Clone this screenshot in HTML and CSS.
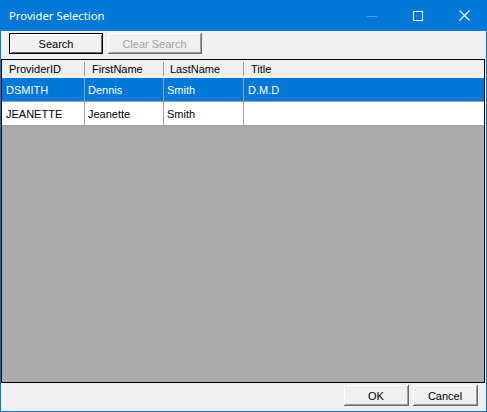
FILE: index.html
```html
<!DOCTYPE html>
<html lang="en">
<head>
  <meta charset="UTF-8" />
  <title>Provider Selection</title>
  <link rel="stylesheet" href="styles.css">
</head>
<body>
  <div class="window">
    <div class="titlebar">
      <span class="title">Provider Selection</span>
      <div class="caption-btn">
        <svg width="10" height="10" viewBox="0 0 10 10"><line x1="0" y1="5.5" x2="10" y2="5.5" stroke="#4a9fe6" stroke-width="1"/></svg>
      </div>
      <div class="caption-btn">
        <svg width="10" height="10" viewBox="0 0 10 10"><rect x="0.5" y="0.5" width="9" height="9" fill="none" stroke="#fff" stroke-width="1"/></svg>
      </div>
      <div class="caption-btn">
        <svg width="11" height="11" viewBox="0 0 11 11"><path d="M0.5 0.5 L10.5 10.5 M10.5 0.5 L0.5 10.5" stroke="#fff" stroke-width="1.1"/></svg>
      </div>
    </div>

    <div class="toolbar">
      <button class="btn btn-default">Search</button>
      <button class="btn" disabled>Clear Search</button>
    </div>

    <div class="grid">
      <div class="row header">
        <div class="cell c1">ProviderID</div>
        <div class="cell c2">FirstName</div>
        <div class="cell c3">LastName</div>
        <div class="cell c4">Title</div>
      </div>
      <div class="row selected">
        <div class="cell c1">DSMITH</div>
        <div class="cell c2">Dennis</div>
        <div class="cell c3">Smith</div>
        <div class="cell c4">D.M.D</div>
      </div>
      <div class="row">
        <div class="cell c1">JEANETTE</div>
        <div class="cell c2">Jeanette</div>
        <div class="cell c3">Smith</div>
        <div class="cell c4"></div>
      </div>
    </div>

    <div class="footer">
      <button class="btn btn-small">OK</button>
      <button class="btn btn-small">Cancel</button>
    </div>
  </div>
</body>
</html>
```

FILE: styles.css
```css
* {
  margin: 0;
  padding: 0;
  box-sizing: border-box;
}

html, body {
  background: #f0f0f0;
  font-family: 'Liberation Sans', Arial, sans-serif;
  font-size: 11px;
  color: #000;
}

.window {
  width: 487px;
  height: 412px;
  border: 1px solid #0078d7;
  border-top: none;
  display: flex;
  flex-direction: column;
  background: #f0f0f0;
}

.titlebar {
  height: 31px;
  background: #0078d7;
  display: flex;
  align-items: center;
  margin: 0 -1px;
  padding-left: 9px;
}

.title {
  flex: 1;
  color: #fff;
  font-family: 'Noto Sans', 'Open Sans', sans-serif;
  font-size: 11.3px;
  padding-bottom: 1px;
}

.caption-btn {
  width: 46px;
  height: 31px;
  display: flex;
  align-items: center;
  justify-content: center;
}

.toolbar {
  height: 28px;
  display: flex;
  gap: 5px;
  padding: 2px 0 0 8px;
}

.btn {
  width: 94px;
  height: 21px;
  font-family: 'Liberation Sans', Arial, sans-serif;
  font-size: 11px;
  color: #000;
  background: #f0f0f0;
  border: none;
  border-right: 1px solid #696969;
  border-bottom: 1px solid #696969;
  box-shadow: inset 1px 1px 0 #fff, inset -1px -1px 0 #a0a0a0;
  padding-top: 1px;
}

.btn-default {
  border: 1px solid #000;
  box-shadow: inset 1px 1px 0 #fff, inset -1px -1px 0 #696969;
}

.btn:disabled {
  color: #a0a0a0;
}

.grid {
  flex: 1;
  margin-right: 1px;
  border: 1px solid #000;
  background: #ababab;
}

.row {
  display: flex;
  height: 24px;
  background: #fff;
  border-bottom: 1px solid #a0a0a0;
}

.cell {
  display: flex;
  align-items: center;
  padding-left: 4px;
  border-right: 1px solid #a0a0a0;
  white-space: nowrap;
}

.c1 { width: 83px; }
.c2 { width: 79px; padding-left: 3px; }
.c3 { width: 80px; padding-left: 3px; }
.c4 { flex: 1; border-right: none; }

.row.selected {
  background: #0078d7;
  color: #fff;
}

.row.header {
  height: 18px;
  background: #f0f0f0;
  border-bottom: none;
}

.header .cell {
  padding-left: 7px;
  border-right: none;
}

.header .c1,
.header .c2,
.header .c3 {
  background: linear-gradient(#a0a0a0, #a0a0a0) no-repeat right 2px / 1px 14px;
}

.header .c3 { padding-left: 6px; }

.footer {
  height: 28px;
  display: flex;
  justify-content: flex-end;
  gap: 4px;
  padding: 2px 8px 0 0;
}

.btn-small {
  width: 65px;
}
```
